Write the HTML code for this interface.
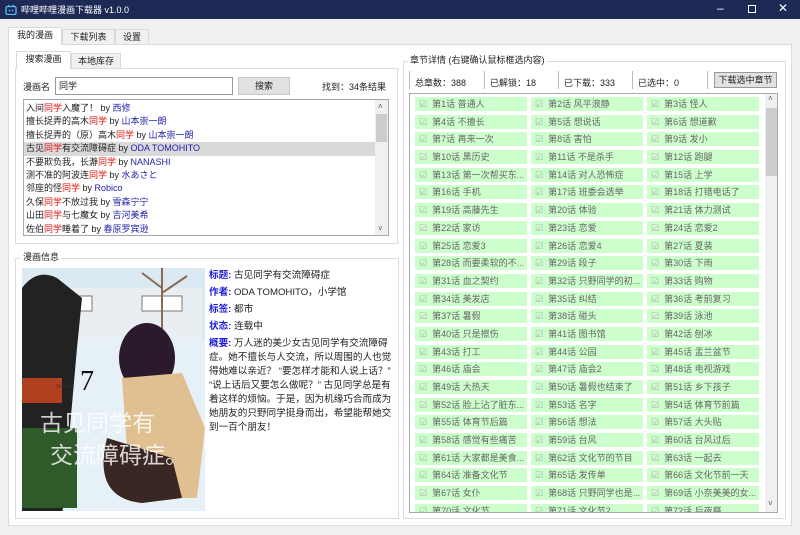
<!DOCTYPE html>
<html><head><meta charset="utf-8"><style>
*{box-sizing:border-box;margin:0;padding:0}
body{width:800px;height:535px;overflow:hidden;background:#f0f0f0;font-family:"Liberation Sans","Noto Sans CJK SC",sans-serif;font-size:9px;color:#222;position:relative}
.a{position:absolute;white-space:nowrap}
#title{left:0;top:0;width:800px;height:19px;background:#1e2a55;color:#fff;font-size:9px}
.tab{position:absolute;border:1px solid #d9d9d9;border-bottom:none;background:#f0f0f0;text-align:center;line-height:15px;font-size:9px}
.panel{position:absolute;background:#fff;border:1px solid #dcdcdc}
.r{color:#e01010}.b{color:#2222aa}
.lst div{height:13.4px;line-height:13.4px;padding-left:2px;font-size:9px}
.grp{position:absolute;border:1px solid #dcdcdc}
.info .k{color:#1a1adb;font-weight:bold}
.ch{position:absolute;left:409px;top:93px;width:369px;height:420px;border:1px solid #a8a8a8;background:#fff;overflow:hidden}
.g{display:grid;grid-template-columns:112px 112px 112px;column-gap:4px;row-gap:3.7px;padding:3px 0 0 5px}
.g div{height:14px;background:#ccffcc;color:#666;font-size:9px;line-height:14px;padding-left:4px;white-space:nowrap;overflow:hidden}
.g div:before{content:"☑";color:#aaa;margin-right:5px;font-size:9px}
</style></head><body>
<div id="title" class="a"><svg class="a" style="left:5px;top:4px" width="12" height="11"><rect x="1" y="2.5" width="10" height="8" rx="1.5" fill="none" stroke="#4fc3f7" stroke-width="1.3"/><path d="M3 1L5 2.5M9 1L7 2.5" stroke="#4fc3f7"/><circle cx="4.5" cy="6.5" r=".9" fill="#4fc3f7"/><circle cx="7.5" cy="6.5" r=".9" fill="#4fc3f7"/></svg><span class="a" style="left:21px;top:3px">哔哩哔哩漫画下载器 v1.0.0</span>
<span class="a" style="left:717px;top:1px;font-size:12px">–</span><span class="a" style="left:748px;top:5px;width:8px;height:8px;border:1px solid #fff"></span><span class="a" style="left:778px;top:1px;font-size:12px">✕</span></div>

<div class="tab" style="left:8px;top:27px;width:54px;height:18px;background:#fff;z-index:2">我的漫画</div>
<div class="tab" style="left:62px;top:29px;width:53px;height:15px">下载列表</div>
<div class="tab" style="left:115px;top:29px;width:34px;height:15px">设置</div>
<div class="panel" style="left:8px;top:44px;width:784px;height:482px"></div>

<div class="tab" style="left:16px;top:51px;width:55px;height:18px;background:#fff;z-index:2">搜索漫画</div>
<div class="tab" style="left:71px;top:53px;width:50px;height:16px">本地库存</div>
<div class="panel" style="left:15px;top:68px;width:383px;height:176px"></div>
<span class="a" style="left:23px;top:80px">漫画名</span>
<div class="a" style="left:55px;top:77px;width:178px;height:18px;border:1px solid #9a9a9a;background:#fff;padding-left:3px;line-height:16px">同学</div>
<div class="a" style="left:238px;top:77px;width:52px;height:18px;border:1px solid #c8c8c8;background:#e1e1e1;text-align:center;line-height:16px">搜索</div>
<span class="a" style="left:322px;top:80px">找到：34条结果</span>
<div class="a lst" style="left:23px;top:99px;width:366px;height:137px;border:1px solid #a8a8a8;background:#fff;padding-top:2px">
<div>入间<span class="r">同学</span>入魔了！ by <span class="b">西修</span></div>
<div>擅长捉弄的高木<span class="r">同学</span> by <span class="b">山本崇一朗</span></div>
<div>擅长捉弄的（原）高木<span class="r">同学</span> by <span class="b">山本崇一朗</span></div>
<div style="background:#d9d9d9;width:351px">古见<span class="r">同学</span>有交流障碍症 by <span class="b">ODA TOMOHITO</span></div>
<div>不要欺负我，长瀞<span class="r">同学</span> by <span class="b">NANASHI</span></div>
<div>测不准的阿波连<span class="r">同学</span> by <span class="b">水あさと</span></div>
<div>邻座的怪<span class="r">同学</span> by <span class="b">Robico</span></div>
<div>久保<span class="r">同学</span>不放过我 by <span class="b">雪森宁宁</span></div>
<div>山田<span class="r">同学</span>与七魔女 by <span class="b">吉河美希</span></div>
<div>佐伯<span class="r">同学</span>睡着了 by <span class="b">春原罗宾逊</span></div>
<div class="a" style="right:0;top:0;width:13px;height:135px;background:#f0f0f0"><div class="a" style="left:1px;top:14px;width:11px;height:28px;background:#cdcdcd;padding:0"></div><span class="a" style="left:3px;top:0;font-size:8px;color:#555">˄</span><span class="a" style="left:3px;top:122px;font-size:8px;color:#555">˅</span></div>
</div>

<div class="grp" style="left:15px;top:258px;width:384px;height:261px"></div>
<span class="a" style="left:21px;top:250px;background:#fff;padding:0 2px">漫画信息</span>
<svg class="a" style="left:22px;top:268px" width="183" height="243">
<rect width="183" height="243" fill="#dbe9f3"/>
<rect x="30" y="20" width="150" height="50" fill="#e8eef2"/>
<rect x="40" y="28" width="30" height="15" fill="#fff" stroke="#777"/><rect x="120" y="28" width="40" height="15" fill="#fff" stroke="#777"/>
<path d="M140 70L140 0M140 20L120 5M140 25L165 8" stroke="#8a6a50" stroke-width="2"/>
<rect y="70" width="183" height="173" fill="#e6f0f7"/>
<path d="M0 20Q15 0 35 10L60 30L55 80L40 250L0 250Z" fill="#222"/>
<rect x="0" y="110" width="40" height="25" fill="#b04020"/>
<rect x="0" y="160" width="55" height="80" fill="#2f5a2a"/>
<ellipse cx="125" cy="90" rx="28" ry="35" fill="#2a1a2c"/>
<path d="M100 110L160 105L183 160L175 230L120 230L105 180Z" fill="#e0c090"/>
<path d="M85 170Q70 230 120 235L160 230L150 190Z" fill="#3a2622"/>
<text x="58" y="122" font-size="28" font-family="Liberation Serif" fill="#111">7</text>
<text x="34" y="120" font-size="5" fill="#333">Volume</text>
<text x="18" y="163" font-size="23" fill="#fff" fill-opacity=".8">古见同学有</text>
<text x="28" y="195" font-size="23" fill="#fff" fill-opacity=".8">交流障碍症。</text>
</svg>
<div class="a info" style="left:209px;top:267px;width:184px;white-space:normal;line-height:17px;font-size:9.6px">
<div><span class="k">标题:</span> 古见同学有交流障碍症</div>
<div><span class="k">作者:</span> ODA TOMOHITO，小学馆</div>
<div><span class="k">标签:</span> 都市</div>
<div><span class="k">状态:</span> 连载中</div>
<div style="line-height:14px;margin-top:2px"><span class="k">概要:</span> 万人迷的美少女古见同学有交流障碍症。她不擅长与人交流，所以周围的人也觉得她难以亲近？ “要怎样才能和人说上话？” “说上话后又要怎么做呢？” 古见同学总是有着这样的烦恼。于是，因为机缘巧合而成为她朋友的只野同学挺身而出，希望能帮她交到一百个朋友！</div>
</div>

<div class="grp" style="left:403px;top:61px;width:383px;height:458px"></div>
<span class="a" style="left:408px;top:53px;background:#fff;padding:0 2px">章节详情 (右键确认鼠标框选内容)</span>
<div class="a" style="left:409px;top:71px;height:18px;border-left:1px solid #bbb"></div>
<span class="a" style="left:415px;top:76px">总章数：388</span>
<div class="a" style="left:484px;top:71px;height:18px;border-left:1px solid #bbb"></div>
<span class="a" style="left:490px;top:76px">已解锁：18</span>
<div class="a" style="left:558px;top:71px;height:18px;border-left:1px solid #bbb"></div>
<span class="a" style="left:564px;top:76px">已下载：333</span>
<div class="a" style="left:632px;top:71px;height:18px;border-left:1px solid #bbb"></div>
<span class="a" style="left:638px;top:76px">已选中：0</span>
<div class="a" style="left:707px;top:71px;height:18px;border-left:1px solid #bbb"></div>
<div class="a" style="left:714px;top:72px;width:63px;height:16px;border:1px solid #999;background:#e1e1e1;text-align:center;line-height:14px">下载选中章节</div>
<div class="ch"><div class="g">
<div>第1话 普通人</div><div>第2话 风平浪静</div><div>第3话 怪人</div>
<div>第4话 不擅长</div><div>第5话 想说话</div><div>第6话 想道歉</div>
<div>第7话 再来一次</div><div>第8话 害怕</div><div>第9话 发小</div>
<div>第10话 黑历史</div><div>第11话 不是杀手</div><div>第12话 跑腿</div>
<div>第13话 第一次帮买东...</div><div>第14话 对人恐怖症</div><div>第15话 上学</div>
<div>第16话 手机</div><div>第17话 班委会选举</div><div>第18话 打错电话了</div>
<div>第19话 高藤先生</div><div>第20话 体验</div><div>第21话 体力测试</div>
<div>第22话 家访</div><div>第23话 恋爱</div><div>第24话 恋爱2</div>
<div>第25话 恋爱3</div><div>第26话 恋爱4</div><div>第27话 夏装</div>
<div>第28话 而要柔软的不...</div><div>第29话 段子</div><div>第30话 下雨</div>
<div>第31话 血之契约</div><div>第32话 只野同学的初...</div><div>第33话 购物</div>
<div>第34话 美发店</div><div>第35话 纠结</div><div>第36话 考前复习</div>
<div>第37话 暑假</div><div>第38话 碰头</div><div>第39话 泳池</div>
<div>第40话 只是擦伤</div><div>第41话 图书馆</div><div>第42话 刨冰</div>
<div>第43话 打工</div><div>第44话 公园</div><div>第45话 盂兰盆节</div>
<div>第46话 庙会</div><div>第47话 庙会2</div><div>第48话 电视游戏</div>
<div>第49话 大热天</div><div>第50话 暑假也结束了</div><div>第51话 乡下孩子</div>
<div>第52话 脸上沾了脏东...</div><div>第53话 名字</div><div>第54话 体育节前篇</div>
<div>第55话 体育节后篇</div><div>第56话 想法</div><div>第57话 大头贴</div>
<div>第58话 感觉有些痛苦</div><div>第59话 台风</div><div>第60话 台风过后</div>
<div>第61话 大家都是美食...</div><div>第62话 文化节的节目</div><div>第63话 一起去</div>
<div>第64话 准备文化节</div><div>第65话 发传单</div><div>第66话 文化节前一天</div>
<div>第67话 女仆</div><div>第68话 只野同学也是...</div><div>第69话 小奈美美的女...</div>
<div>第70话 文化节</div><div>第71话 文化节2</div><div>第72话 后夜祭</div>
</div>
<div class="a" style="left:355px;top:0;width:13px;height:418px;background:#f0f0f0"><div class="a" style="left:1px;top:14px;width:11px;height:68px;background:#cdcdcd"></div><span class="a" style="left:3px;top:0;font-size:8px;color:#555">˄</span><span class="a" style="left:3px;top:405px;font-size:8px;color:#555">˅</span></div>
</div>
</body></html>
